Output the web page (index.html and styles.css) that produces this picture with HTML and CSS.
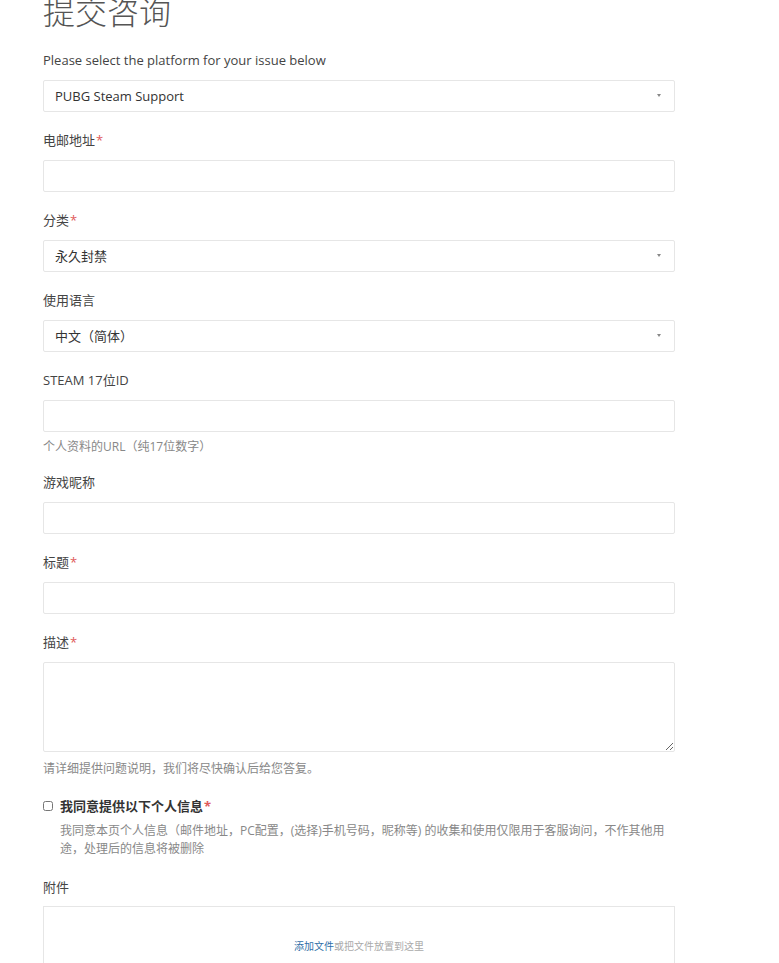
FILE: index.html
```html
<!DOCTYPE html>
<html lang="zh-CN">
<head>
    <meta charset="UTF-8">
    <meta name="viewport" content="width=device-width, initial-scale=1.0">
    <title>提交咨询</title>
    <link rel="stylesheet" href="styles.css">
</head>
<body>
    <div class="container">
        <h1>提交咨询</h1>
        <form class="request-form">
            <div class="field">
                <label for="platform">Please select the platform for your issue below</label>
                <div class="select-wrap">
                    <select id="platform">
                        <option>PUBG Steam Support</option>
                    </select>
                </div>
            </div>

            <div class="field">
                <label for="email">电邮地址<span class="req">*</span></label>
                <input type="text" id="email">
            </div>

            <div class="field">
                <label for="category">分类<span class="req">*</span></label>
                <div class="select-wrap">
                    <select id="category">
                        <option>永久封禁</option>
                    </select>
                </div>
            </div>

            <div class="field">
                <label for="lang">使用语言</label>
                <div class="select-wrap">
                    <select id="lang">
                        <option>中文（简体）</option>
                    </select>
                </div>
            </div>

            <div class="field with-hint">
                <label for="steamid">STEAM 17位ID</label>
                <input type="text" id="steamid">
                <p class="hint">个人资料的URL（纯17位数字）</p>
            </div>

            <div class="field">
                <label for="nick">游戏昵称</label>
                <input type="text" id="nick">
            </div>

            <div class="field">
                <label for="subject">标题<span class="req">*</span></label>
                <input type="text" id="subject">
            </div>

            <div class="field with-hint desc">
                <label for="desc">描述<span class="req">*</span></label>
                <textarea id="desc"></textarea>
                <p class="hint hint-low">请详细提供问题说明，我们将尽快确认后给您答复。</p>
            </div>

            <div class="field consent">
                <label class="check" for="agree"><input type="checkbox" id="agree">我同意提供以下个人信息<span class="req">*</span></label>
                <p class="consent-text">我同意本页个人信息（邮件地址，PC配置，(选择)手机号码，昵称等) 的收集和使用仅限用于客服询问，不作其他用途，处理后的信息将被删除</p>
            </div>

            <div class="field">
                <label>附件</label>
                <div class="dropzone">
                    <a href="#">添加文件</a>或把文件放置到这里
                </div>
            </div>
        </form>
    </div>
</body>
</html>
```

FILE: styles.css
```css
body {
    font-family: "Open Sans", "Noto Sans CJK SC", sans-serif;
    margin: 0;
    padding: 0;
    background-color: #fff;
    color: #333;
}

.container {
    width: 632px;
    padding-left: 43px;
}

h1 {
    font-family: "Noto Sans CJK SC", sans-serif;
    font-weight: 300;
    font-size: 32px;
    line-height: 40px;
    color: #555;
    margin: -10px 0 20px;
}

.field {
    margin-bottom: 18px;
}

.with-hint {
    margin-bottom: 15px;
}

.with-hint.desc {
    margin-bottom: 17px;
}

label {
    display: block;
    font-size: 13px;
    line-height: 20px;
    color: #444;
    margin-bottom: 10px;
}

.req {
    color: #e05a5a;
    margin-left: 1px;
}

input[type="text"],
select,
textarea {
    display: block;
    width: 100%;
    box-sizing: border-box;
    height: 32px;
    border: 1px solid #e6e6e6;
    border-radius: 2px;
    background: #fff;
    font-family: inherit;
    font-size: 13px;
    color: #333;
    padding: 0 11px;
}

textarea {
    height: 90px;
    padding: 6px 11px;
    resize: vertical;
}

.select-wrap {
    position: relative;
}

.select-wrap select {
    appearance: none;
    -webkit-appearance: none;
}

.select-wrap::after {
    content: "";
    position: absolute;
    right: 14px;
    top: 14px;
    border-left: 2px solid transparent;
    border-right: 2px solid transparent;
    border-top: 3px solid #888;
}

.hint {
    font-size: 12px;
    line-height: 20px;
    color: #888;
    margin: 5px 0 0;
}

.hint-low {
    margin-top: 7px;
}

.check {
    display: flex;
    align-items: center;
    font-weight: bold;
    color: #333;
    margin-bottom: 6px;
}

.check input {
    width: 10px;
    height: 10px;
    margin: 0 7px 0 0;
}

.consent-text {
    font-size: 12px;
    line-height: 18px;
    color: #888;
    margin: 0;
    padding: 0 5px 0 17px;
}

.consent {
    margin-bottom: 19px;
}

.dropzone {
    border: 1px solid #e6e6e6;
    height: 76px;
    display: flex;
    justify-content: center;
    align-items: center;
    font-size: 10px;
    color: #aaa;
    margin-top: -1px;
}

.dropzone a {
    color: #2f6fa8;
    text-decoration: none;
}
```
